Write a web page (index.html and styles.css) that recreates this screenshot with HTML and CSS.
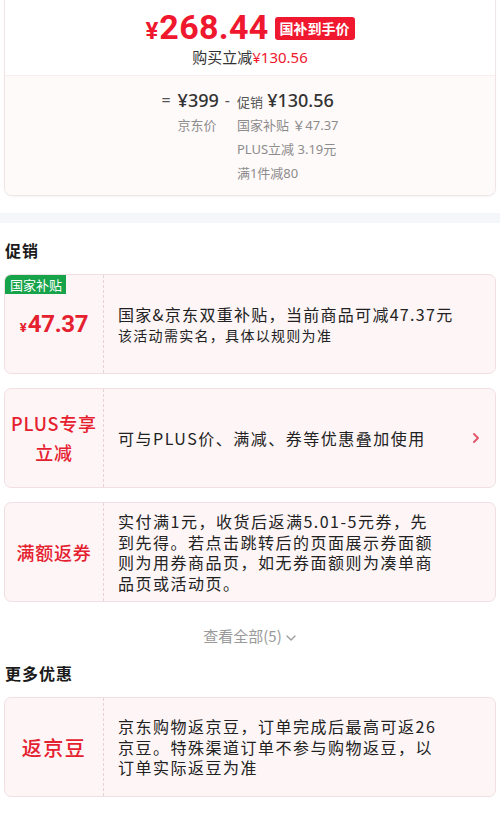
FILE: index.html
```html
<!DOCTYPE html>
<html lang="zh-CN">
<head>
<meta charset="utf-8">
<link rel="stylesheet" href="styles.css">
</head>
<body>
<div class="page">
  <section class="summary">
    <div class="summary-top">
      <div class="price-row">
        <span class="price-yen">¥</span><span class="price-num">268.44</span>
        <span class="price-badge">国补到手价</span>
      </div>
      <div class="instant">购买立减<span class="red">¥130.56</span></div>
    </div>
    <div class="summary-bottom">
      <div class="calc">
        <span class="op">=</span>
        <span class="amt">¥399</span>
        <span class="op minus">-</span>
        <span class="promo"><span class="promo-label">促销</span> <span class="amt">¥130.56</span></span>
        <span></span>
        <span class="sub">京东价</span>
        <span></span>
        <span class="sub">国家补贴 ￥47.37</span>
        <span></span><span></span><span></span>
        <span class="sub">PLUS立减 3.19元</span>
        <span></span><span></span><span></span>
        <span class="sub">满1件减80</span>
      </div>
    </div>
  </section>

  <div class="band"></div>

  <h2 class="heading">促销</h2>

  <div class="card">
    <span class="tag">国家补贴</span>
    <div class="card-left"><span class="small-yen">¥</span><span class="big-num">47.37</span></div>
    <div class="card-right wide">
      <div class="line-main">国家&amp;京东双重补贴，当前商品可减47.37元</div>
      <div class="line-sub">该活动需实名，具体以规则为准</div>
    </div>
  </div>

  <div class="card">
    <div class="card-left label">PLUS专享<br>立减</div>
    <div class="card-right">可与PLUS价、满减、券等优惠叠加使用</div>
    <svg class="arrow" width="10" height="14" viewBox="0 0 10 14"><path d="M3 3 L7 7 L3 11" fill="none" stroke="#e2596c" stroke-width="2" stroke-linecap="round" stroke-linejoin="round"/></svg>
  </div>

  <div class="card">
    <div class="card-left label">满额返券</div>
    <div class="card-right">实付满1元，收货后返满5.01-5元券，先到先得。若点击跳转后的页面展示券面额则为用券商品页，如无券面额则为凑单商品页或活动页。</div>
  </div>

  <div class="more-link">查看全部(5)<svg class="chev" width="12" height="10" viewBox="0 0 12 10"><path d="M2 3 L6 7 L10 3" fill="none" stroke="#9a9a9a" stroke-width="1.3" stroke-linecap="round" stroke-linejoin="round"/></svg></div>

  <h2 class="heading heading-more">更多优惠</h2>

  <div class="card">
    <div class="card-left label big">返京豆</div>
    <div class="card-right">京东购物返京豆，订单完成后最高可返26京豆。特殊渠道订单不参与购物返豆，以订单实际返豆为准</div>
  </div>
</div>
</body>
</html>
```

FILE: styles.css
```css
* { box-sizing: border-box; }
html, body { margin: 0; padding: 0; background: #fff; }
body {
  font-family: "Noto Sans", "Noto Sans CJK SC", sans-serif;
  color: #222;
  width: 500px;
  overflow: hidden;
}
.page { padding: 0 4px; }

.summary {
  border: 1px solid #efe4e6;
  border-top: none;
  border-radius: 0 0 8px 8px;
  overflow: hidden;
  box-shadow: 0 1px 2px rgba(0,0,0,0.04);
}
.summary-top {
  height: 75px;
  display: flex;
  flex-direction: column;
  align-items: center;
  padding-top: 8px;
  background: #fff;
}
.price-row {
  display: flex;
  align-items: baseline;
  height: 38px;
  color: #f0182e;
  font-family: Roboto, "Noto Sans", sans-serif;
  font-weight: 700;
}
.price-yen { font-size: 24px; margin-right: 1px; }
.price-num { font-size: 34px; letter-spacing: 0.3px; line-height: 38px; }
.price-badge {
  align-self: center;
  margin-left: 6px;
  background: #f0182e;
  color: #fff;
  font-family: "Noto Sans CJK SC", sans-serif;
  font-size: 14px;
  font-weight: 700;
  line-height: 23px;
  padding: 0 5px;
  border-radius: 3px;
  margin-top: 2px;
}
.instant {
  font-size: 15px;
  line-height: 22px;
  color: #333;
}
.red { color: #f0182e; }

.summary-bottom {
  background: #fffafa;
  border-top: 1px solid #f8eeee;
  padding: 12px 0 11px;
}
.calc {
  display: grid;
  grid-template-columns: auto auto auto auto;
  justify-content: center;
  align-items: center;
  column-gap: 7px;
  grid-auto-rows: 24px;
}
.op { color: #555; font-size: 16px; }
.minus { margin-left: -1px; }
.amt { font-size: 18px; color: #333; font-weight: 500; }
.promo-label { font-size: 13px; color: #555; }
.sub { font-size: 13px; color: #8c8c8c; }

.band {
  height: 10px;
  margin: 17px -4px 0;
  background: #f5f6fa;
}
.heading {
  margin: 15px 0 12px 1px;
  font-size: 16px;
  line-height: 24px;
  font-weight: 700;
  letter-spacing: 1px;
  color: #1a1a1a;
  font-family: "Noto Sans CJK SC", sans-serif;
}
.heading-more { margin-top: 15px; }

.card {
  position: relative;
  display: flex;
  align-items: stretch;
  min-height: 100px;
  margin-bottom: 14px;
  background: #fdf5f6;
  border: 1px solid #f1e0e3;
  border-radius: 7px;
  font-family: "Noto Sans CJK SC", sans-serif;
}
.card-left {
  width: 99px;
  flex: none;
  display: flex;
  align-items: center;
  justify-content: center;
  border-right: 1px dashed #e6d3d6;
  color: #e5202f;
  text-align: center;
}
.label {
  font-size: 18px;
  font-weight: 500;
  line-height: 29px;
  letter-spacing: 0.8px;
}
.label.big { font-size: 20px; letter-spacing: 1.5px; }
.small-yen { font-size: 13px; font-weight: 700; margin-top: 6px; margin-right: 1px; font-family: Roboto, sans-serif; }
.big-num { font-size: 24px; font-weight: 700; font-family: Roboto, sans-serif; letter-spacing: -0.3px; }
.card-right {
  align-self: center;
  padding: 8px 0 8px 14px;
  width: 334px;
  font-size: 16px;
  line-height: 20.5px;
  letter-spacing: 1.5px;
  color: #222;
}
.card-right.wide { width: auto; padding-right: 0; }
.line-main { font-size: 16px; line-height: 22px; letter-spacing: 1.3px; }
.line-sub { font-size: 14px; line-height: 21px; letter-spacing: 1.3px; }
.tag {
  position: absolute;
  left: 0;
  top: 0;
  background: #17a34a;
  color: #fff;
  font-size: 13px;
  line-height: 19px;
  padding: 0 4px 0 5px;
  border-radius: 6px 0 0 0;
}
.arrow {
  position: absolute;
  right: 14px;
  top: 50%;
  margin-top: -7px;
}
.more-link {
  margin: 24px 0 0;
  text-align: center;
  font-size: 15px;
  line-height: 20px;
  color: #999;
  font-family: "Noto Sans CJK SC", sans-serif;
}
.chev { margin-left: 3px; vertical-align: -1px; }
```
